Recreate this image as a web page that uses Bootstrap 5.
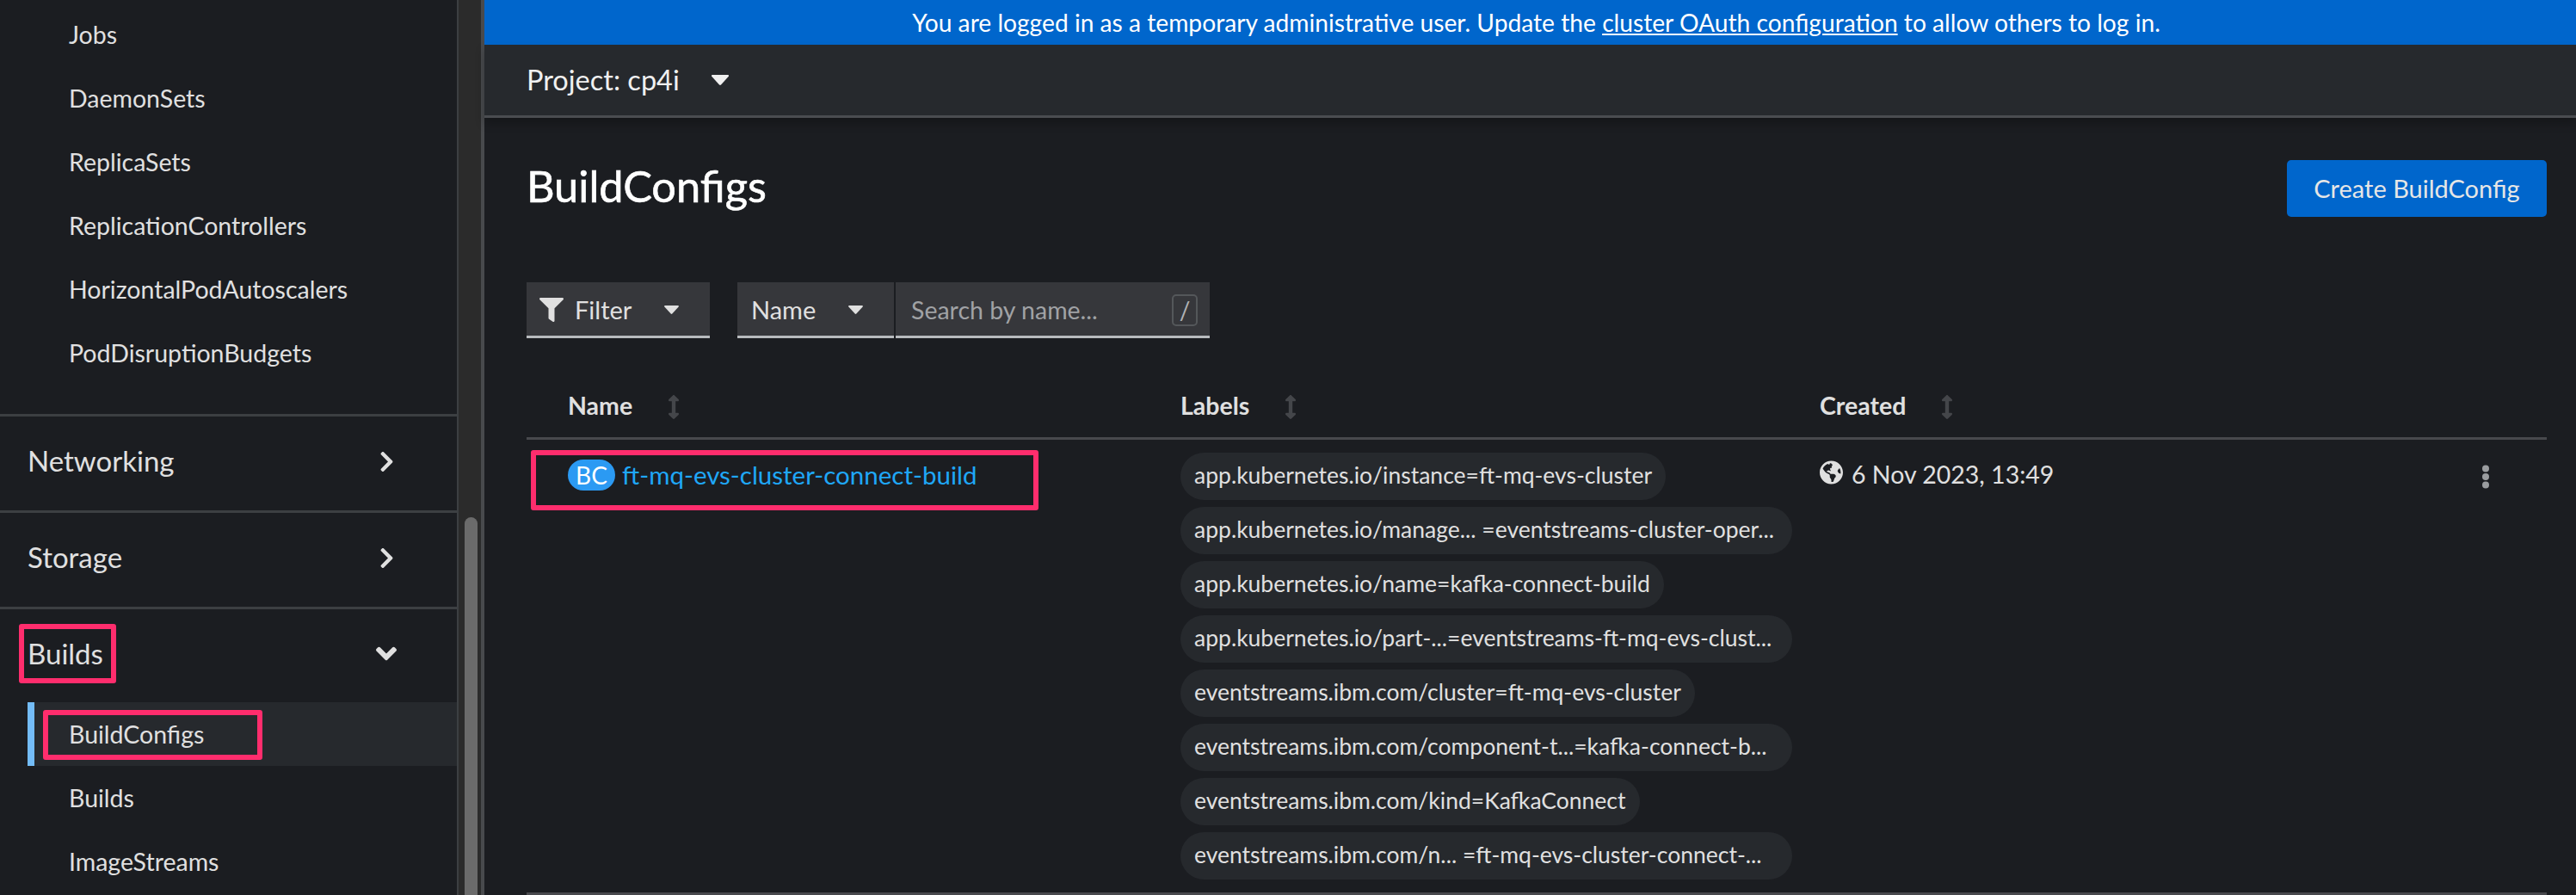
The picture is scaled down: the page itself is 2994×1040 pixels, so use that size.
<!DOCTYPE html>
<html lang="en">
<head>
    <meta charset="UTF-8">
    <title>BuildConfigs</title>
    <link href="https://cdn.jsdelivr.net/npm/bootstrap@5.3.0/dist/css/bootstrap.min.css" rel="stylesheet">
    <style>
        html, body { height: 1040px; overflow: hidden; }
        body { background: #1b1d21; color: #e0e0e0; font-family: "Lato", "Liberation Sans", sans-serif; font-size: 28px; }

        /* sidebar */
        .side-col { width: 533px; flex: none; height: 1040px; overflow: hidden; padding-top: 3px; border-right: 2px solid #3c3f42; }
        .side-link { display: flex; align-items: center; height: 74px; padding-left: 80px; color: #e0e0e0; text-decoration: none; font-size: 28.500px; }
        .side-group { border-top: 3px solid #3c3f42; height: 112px; padding: 0 73px 5px 32px; font-size: 33px; }
        .side-first { margin-top: 34px; }
        .side-open { border-top: 3px solid #3c3f42; height: 111px; padding: 0 70px 5px 32px; font-size: 33px; }
        .side-sub { margin-left: 32px; padding-left: 40px; height: 74px; background: #26292d; border-left: 8px solid #73bcf7; display: flex; align-items: center; font-size: 28.500px; }
        .chev { width: 17px; height: 27px; fill: #e0e0e0; }
        .chev-down { width: 24px; height: 39px; fill: #e0e0e0; }

        /* scrollbar */
        .scroll-track { width: 30px; flex: none; background: #2b2b2b; border-right: 4px solid #484a4d; padding: 601px 4px 0 7px; }
        .scroll-thumb { height: 460px; background: #6b6b6b; border-radius: 8px; }

        /* annotation */
        .anno-wrap { position: relative; }
        .anno { position: absolute; border: 6px solid #ff2d6d; border-radius: 3px; pointer-events: none; }
        .anno-builds { left: -10px; right: -15px; top: -10px; bottom: -10px; }
        .anno-configs { left: -30px; right: -68px; top: -7px; bottom: -9px; }
        .anno-name { left: -43px; right: -72px; top: -11px; bottom: -23px; }

        /* main */
        .banner { height: 52px; background: #06c; color: #fff; font-size: 28.200px; padding-left: 14px; }
        .banner a { color: #fff; }
        .proj-bar { height: 85px; background: #26292d; border-bottom: 3px solid #4a4c50; padding-left: 49px; font-size: 32.500px; box-shadow: 0 6px 10px rgba(0,0,0,.25); color: #f0f0f0; gap: 37px; }
        .caret-ic { width: 20px; height: 12px; fill: #f0f0f0; }
        .caret-small { width: 17px; height: 10px; fill: #e0e0e0; margin-left: 38px; }
        .head-row { padding: 49px 34px 0 49px; height: 191px; }
        .page-title { font-size: 50.500px; font-weight: 400; -webkit-text-stroke: .6px #fff; color: #fff; margin: 0; line-height: 1; padding-top: 5px; }
        .create-btn { width: 302px; height: 66px; background: #06c; border: 0; border-radius: 5px; color: #e6e6e6; font-size: 29px; padding: 0; }

        .tool-row { padding-left: 49px; gap: 32px; }
        .tool-btn { height: 65px; background: #36373b; border: 0; border-bottom: 3px solid #b8bbbe; border-radius: 0; color: #e0e0e0; font-size: 29px; padding: 2px 0 0; display: flex; align-items: center; }
        .tool-filter { width: 213px; padding-left: 15px; }
        .tool-name { width: 182px; padding-left: 16px; }
        .funnel { width: 28px; height: 28px; fill: #e0e0e0; margin-right: 13px; }
        .search-box { width: 365px; margin-left: 2px; height: 65px; background: #36373b; border-bottom: 3px solid #b8bbbe; padding: 2px 14px 0 18px; }
        .search-input { background: transparent; border: 0; padding: 0; color: #e0e0e0; font-size: 28.500px; box-shadow: none; border-radius: 0; }
        .search-input::placeholder { color: #a0a2a5; opacity: 1; }
        .key-hint { width: 30px; height: 37px; flex: none; border: 2px solid #54575a; border-radius: 5px; color: #b0b2b5; font-size: 28px; line-height: 1; }

        .res-wrap { margin: 0 34px 0 49px; }
        .res-table { table-layout: fixed; width: 2348px; margin: 0; --bs-table-bg: transparent; --bs-table-color: #e0e0e0; }
        .res-table > thead > tr > th { height: 116px; padding: 0 16px 15px; vertical-align: bottom; border-bottom: 3px solid #48494d; font-size: 28.500px; font-weight: 700; color: #e0e0e0; }
        .res-table > tbody > tr > td { padding: 15px 16px 0; height: 529px; vertical-align: top; border-bottom: 3px solid #48494d; }
        .res-table > thead > tr > th:first-child, .res-table > tbody > tr > td:first-child { padding-left: 48px; }
        .w-name { width: 744px; }
        .w-labels { width: 743px; }
        .w-created { width: 741px; }
        .w-kebab { width: 120px; }
        .sort-ic { width: 14px; height: 28px; fill: #44464a; margin-left: 41px; vertical-align: -5px; }
        .bc-badge { width: 55px; height: 36px; background: #2b9af3; color: #fff; border-radius: 18px; font-size: 28px; margin-right: 8px; }
        .bc-link { color: #1fa7f8; text-decoration: none; font-size: 29.500px; line-height: 36px; }
        .name-wrap { margin-top: 8px; }
        .chip-list { gap: 8px; }
        .chip { height: 55px; max-width: 711px; background: #26292d; border-radius: 28px; padding: 0 16px; color: #e0e0e0; font-size: 26.500px; white-space: nowrap; overflow: hidden; }
        .chip-full { width: 711px; }
        .date-cell { font-size: 28.500px; line-height: 36px; }
        .date-line { margin-top: 7px; }
        .globe { width: 27px; height: 28px; fill: #e0e0e0; margin-right: 10px; vertical-align: -1px; }
        .kebab { width: 10px; height: 28px; fill: #9a9c9f; margin-left: 28px; margin-top: 8px; }
    </style>
</head>
<body>
    <div class="d-flex">
        <!-- Sidebar -->
        <nav class="side-col">
            <a class="side-link" href="#">Jobs</a>
            <a class="side-link" href="#">DaemonSets</a>
            <a class="side-link" href="#">ReplicaSets</a>
            <a class="side-link" href="#">ReplicationControllers</a>
            <a class="side-link" href="#">HorizontalPodAutoscalers</a>
            <a class="side-link" href="#">PodDisruptionBudgets</a>
            <a class="side-link side-group side-first justify-content-between" href="#">Networking
                <svg class="chev" viewBox="0 0 320 512"><path d="M285.476 272.971L91.132 467.314c-9.373 9.373-24.569 9.373-33.941 0l-22.667-22.667c-9.357-9.357-9.375-24.522-.04-33.901L188.505 256 34.484 101.255c-9.335-9.379-9.317-24.544.04-33.901l22.667-22.667c9.373-9.373 24.569-9.373 33.941 0L285.475 239.03c9.373 9.372 9.373 24.568.001 33.941z"/></svg>
            </a>
            <a class="side-link side-group justify-content-between" href="#">Storage
                <svg class="chev" viewBox="0 0 320 512"><path d="M285.476 272.971L91.132 467.314c-9.373 9.373-24.569 9.373-33.941 0l-22.667-22.667c-9.357-9.357-9.375-24.522-.04-33.901L188.505 256 34.484 101.255c-9.335-9.379-9.317-24.544.04-33.901l22.667-22.667c9.373-9.373 24.569-9.373 33.941 0L285.475 239.03c9.373 9.372 9.373 24.568.001 33.941z"/></svg>
            </a>
            <a class="side-link side-open justify-content-between" href="#"><span class="anno-wrap">Builds<span class="anno anno-builds"></span></span>
                <svg class="chev-down" viewBox="0 0 320 512"><path d="M143 352.3L7 216.3c-9.4-9.4-9.4-24.6 0-33.9l22.6-22.6c9.4-9.4 24.6-9.4 33.9 0l96.4 96.4 96.4-96.4c9.4-9.4 24.6-9.4 33.9 0l22.6 22.6c9.4 9.4 9.4 24.6 0 33.9l-136 136c-9.2 9.4-24.4 9.4-33.8 0z"/></svg>
            </a>
            <div class="side-sub"><span class="anno-wrap">BuildConfigs<span class="anno anno-configs"></span></span></div>
            <a class="side-link" href="#">Builds</a>
            <a class="side-link" href="#">ImageStreams</a>
        </nav>
        <div class="scroll-track"><div class="scroll-thumb"></div></div>

        <!-- Main -->
        <main class="flex-grow-1">
            <div class="banner d-flex align-items-center justify-content-center">
                <span>You are logged in as a temporary administrative user. Update the <a href="#">cluster OAuth configuration</a> to allow others to log in.</span>
            </div>
            <div class="proj-bar d-flex align-items-center">
                <span>Project: cp4i</span>
                <svg class="caret-ic" viewBox="0 0 20 12"><path d="M1 0h18c1 0 1.400 1 .8 1.700L11 11.500c-.6.600-1.400.600-2 0L.2 1.700C-.4 1 0 0 1 0z"/></svg>
            </div>

            <div class="head-row d-flex justify-content-between align-items-start">
                <h1 class="page-title">BuildConfigs</h1>
                <button class="btn create-btn" type="button">Create BuildConfig</button>
            </div>

            <div class="tool-row d-flex">
                <button class="btn tool-btn tool-filter" type="button">
                    <svg class="funnel" viewBox="0 0 512 512"><path d="M487.976 0H24.028C2.71 0-8.047 25.866 7.058 40.971L192 225.941V432c0 7.831 3.821 15.170 10.237 19.662l80 55.980C298.020 518.690 320 507.493 320 487.980V225.941l184.947-184.970C520.021 25.896 509.338 0 487.976 0z"/></svg>
                    Filter
                    <svg class="caret-small" viewBox="0 0 20 12"><path d="M1 0h18c1 0 1.400 1 .8 1.700L11 11.500c-.6.600-1.400.600-2 0L.2 1.700C-.4 1 0 0 1 0z"/></svg>
                </button>
                <div class="d-flex">
                    <button class="btn tool-btn tool-name" type="button">
                        Name
                        <svg class="caret-small" viewBox="0 0 20 12"><path d="M1 0h18c1 0 1.400 1 .8 1.700L11 11.500c-.6.600-1.400.600-2 0L.2 1.700C-.4 1 0 0 1 0z"/></svg>
                    </button>
                    <div class="search-box d-flex align-items-center">
                        <input class="form-control search-input" type="text" placeholder="Search by name...">
                        <span class="key-hint d-flex align-items-center justify-content-center">/</span>
                    </div>
                </div>
            </div>

            <div class="res-wrap">
                <table class="table res-table">
                    <colgroup>
                        <col class="w-name"><col class="w-labels"><col class="w-created"><col class="w-kebab">
                    </colgroup>
                    <thead>
                        <tr>
                            <th>Name<svg class="sort-ic" viewBox="0 0 256 512"><path d="M214.059 377.941H168V134.059h46.059c21.382 0 32.090-25.851 16.971-40.971L144.971 7.029c-9.373-9.373-24.569-9.373-33.941 0L24.971 93.088c-15.119 15.119-4.411 40.971 16.971 40.971H88v243.882H41.941c-21.382 0-32.090 25.851-16.971 40.971l86.059 86.059c9.373 9.373 24.569 9.373 33.941 0l86.059-86.059c15.120-15.119 4.412-40.971-16.970-40.971z"/></svg></th>
                            <th>Labels<svg class="sort-ic" viewBox="0 0 256 512"><path d="M214.059 377.941H168V134.059h46.059c21.382 0 32.090-25.851 16.971-40.971L144.971 7.029c-9.373-9.373-24.569-9.373-33.941 0L24.971 93.088c-15.119 15.119-4.411 40.971 16.971 40.971H88v243.882H41.941c-21.382 0-32.090 25.851-16.971 40.971l86.059 86.059c9.373 9.373 24.569 9.373 33.941 0l86.059-86.059c15.120-15.119 4.412-40.971-16.970-40.971z"/></svg></th>
                            <th>Created<svg class="sort-ic" viewBox="0 0 256 512"><path d="M214.059 377.941H168V134.059h46.059c21.382 0 32.090-25.851 16.971-40.971L144.971 7.029c-9.373-9.373-24.569-9.373-33.941 0L24.971 93.088c-15.119 15.119-4.411 40.971 16.971 40.971H88v243.882H41.941c-21.382 0-32.090 25.851-16.971 40.971l86.059 86.059c9.373 9.373 24.569 9.373 33.941 0l86.059-86.059c15.120-15.119 4.412-40.971-16.970-40.971z"/></svg></th>
                            <th></th>
                        </tr>
                    </thead>
                    <tbody>
                        <tr>
                            <td>
                                <div class="d-inline-flex align-items-center anno-wrap name-wrap">
                                    <span class="bc-badge d-flex align-items-center justify-content-center">BC</span>
                                    <a class="bc-link" href="#">ft-mq-evs-cluster-connect-build</a>
                                    <span class="anno anno-name"></span>
                                </div>
                            </td>
                            <td>
                                <div class="chip-list d-flex flex-column align-items-start">
                                    <span class="chip d-flex align-items-center">app.kubernetes.io/instance=ft-mq-evs-cluster</span>
                                    <span class="chip chip-full d-flex align-items-center">app.kubernetes.io/manage...&nbsp;=eventstreams-cluster-oper...</span>
                                    <span class="chip d-flex align-items-center">app.kubernetes.io/name=kafka-connect-build</span>
                                    <span class="chip chip-full d-flex align-items-center">app.kubernetes.io/part-...=eventstreams-ft-mq-evs-clust...</span>
                                    <span class="chip d-flex align-items-center">eventstreams.ibm.com/cluster=ft-mq-evs-cluster</span>
                                    <span class="chip chip-full d-flex align-items-center">eventstreams.ibm.com/component-t...=kafka-connect-b...</span>
                                    <span class="chip d-flex align-items-center">eventstreams.ibm.com/kind=KafkaConnect</span>
                                    <span class="chip chip-full d-flex align-items-center">eventstreams.ibm.com/n...&nbsp;=ft-mq-evs-cluster-connect-...</span>
                                </div>
                            </td>
                            <td class="date-cell">
                                <div class="date-line">
                                    <svg class="globe" viewBox="0 0 496 512"><path d="M248 8C111.03 8 0 119.03 0 256s111.03 248 248 248 248-111.03 248-248S384.97 8 248 8zm82.29 357.6c-3.9 3.88-7.99 7.95-11.31 11.28-2.99 3-5.1 6.7-6.17 10.71-1.51 5.66-2.73 11.38-4.77 16.87l-17.39 46.85c-13.76 3-28 4.69-42.65 4.69v-27.38c1.69-12.62-7.64-36.26-22.63-51.25-6-6-9.37-14.14-9.37-22.63v-32.01c0-11.64-6.27-22.34-16.46-27.97-14.37-7.95-34.81-19.06-48.81-26.11-11.48-5.78-22.1-13.14-31.65-21.75l-.8-.72a114.792 114.792 0 0 1-18.06-20.74c-9.38-13.77-24.66-36.42-34.59-51.14 20.47-45.5 57.36-82.04 103.2-101.89l24.01 12.01C203.48 89.74 216 82.01 216 70.11v-11.3c7.99-1.29 16.12-2.11 24.39-2.42l28.3 28.3c6.25 6.25 6.25 16.38 0 22.63L264 112l-10.34 10.34c-3.12 3.12-3.12 8.19 0 11.31l4.69 4.69c3.12 3.12 3.12 8.19 0 11.31l-8 8a8.008 8.008 0 0 1-5.66 2.34h-8.99c-2.08 0-4.08.81-5.58 2.27l-9.92 9.65a8.008 8.008 0 0 0-1.58 9.31l15.59 31.19c2.66 5.32-1.21 11.58-7.15 11.58h-5.64c-1.93 0-3.79-.7-5.24-1.96l-9.28-8.06a16.017 16.017 0 0 0-15.55-3.1l-31.17 10.39a11.95 11.95 0 0 0-8.17 11.34c0 4.53 2.56 8.66 6.61 10.69l11.08 5.54c9.41 4.71 19.79 7.16 30.31 7.16s22.59 27.29 32 32h66.75c8.49 0 16.62 3.37 22.63 9.37l13.69 13.69a30.503 30.503 0 0 1 8.93 21.57 46.536 46.536 0 0 1-13.72 32.98zM417 274.25c-5.79-1.45-10.84-5-14.15-9.97l-17.98-26.97a23.97 23.97 0 0 1 0-26.62l19.59-29.38c2.32-3.47 5.5-6.29 9.24-8.15l12.98-6.49C440.2 193.59 448 223.87 448 256c0 8.67-.74 17.16-1.82 25.54L417 274.25z"/></svg>6 Nov 2023, 13:49
                                </div>
                            </td>
                            <td>
                                <svg class="kebab" viewBox="0 0 10 28"><circle cx="5" cy="4.500" r="4"/><circle cx="5" cy="14" r="4"/><circle cx="5" cy="23.500" r="4"/></svg>
                            </td>
                        </tr>
                    </tbody>
                </table>
            </div>
        </main>
    </div>
    <script src="https://cdn.jsdelivr.net/npm/bootstrap@5.3.0/dist/js/bootstrap.bundle.min.js"></script>
</body>
</html>
